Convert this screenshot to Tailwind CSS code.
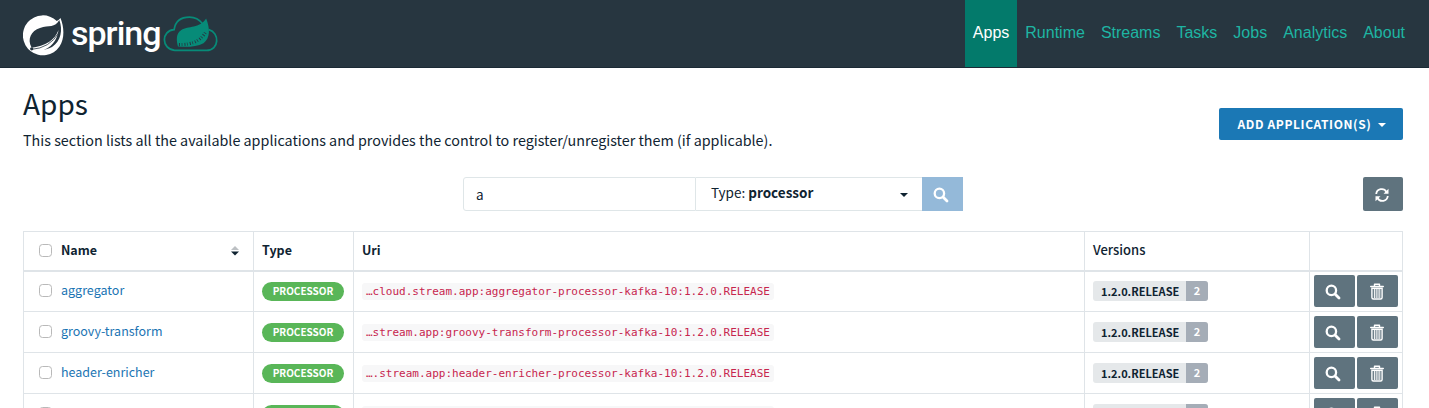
<!DOCTYPE html>
<html lang="en">
<head>
<meta charset="utf-8">
<title>Apps</title>
<script src="https://cdn.jsdelivr.net/npm/@tailwindcss/browser@4"></script>
</head>
<body class="h-[408px] overflow-hidden bg-white font-['Noto_Sans_CJK_SC','Noto_Sans',sans-serif] text-[13.5px] text-[#0f2331]">
<svg class="hidden">
  <symbol id="search" viewBox="0 0 16 16"><circle cx="6.4" cy="6.4" r="4.7" fill="none" stroke="currentColor" stroke-width="2.3"/><path d="M10 10l4 4" stroke="currentColor" stroke-width="2.8" stroke-linecap="round"/></symbol>
  <symbol id="trash" viewBox="0 0 14 17"><path d="M.7 3.5h12.6M4.5 3V1.2h5V3" fill="none" stroke="currentColor" stroke-width="1.4" stroke-linecap="round" stroke-linejoin="round"/><path d="M1.9 5.2v9.3q0 1.5 1.5 1.5h7.2q1.5 0 1.5-1.5V5.2z" fill="none" stroke="currentColor" stroke-width="1.4"/><path d="M4.4 5.5v9.500M6.200 5.500v9.500M8 5.500v9.500M9.800 5.500v9.500" stroke="currentColor" stroke-width="1"/></symbol>
</svg>
<header class="flex h-[68px] items-start justify-between border-b border-[#1b2a35] bg-[#273640] pr-4 pl-[23px]">
  <div class="flex pt-3.5">
    <svg class="mt-px h-[41px] w-[41px]" viewBox="0 0 41 41"><path d="M37.500 3C41 12 42 23 36.500 31.500A20 20 0 1 1 33.800 6Q36 5 37.500 3Z" fill="#fff"/><path d="M36.300 5C32 13 26 10 17 13C8 16 4 24 8.500 32.500C12 36 22 36 29 32C38 26 40 15 36.300 5Z" fill="#273640"/><path d="M35.500 15C32 25 23 31 7.500 33C9 35.500 13 36.200 18 36C28 33 34 26 35.500 15Z" fill="#fff"/><path d="M8 34.500Q27 33 35.500 18" fill="none" stroke="#273640" stroke-width=".8"/><circle cx="8.700" cy="33.800" r="1.600" fill="#273640"/></svg>
    <span class="ml-[7px] w-[92px] font-[Roboto,sans-serif] text-[34px] leading-[38px] font-medium tracking-[-1px] text-white">spring</span>
    <svg class="mt-px h-[37px] w-[55px] overflow-visible" viewBox="0 0 57 38"><path d="M12 36.500C-2 35 -2 16 11.500 15C13 5 20 2 27.500 2C34 2 38 5 41 9M47.500 15C59 18 58.500 36.500 45 36.500H12" fill="none" stroke="#078b78" stroke-width="1.800"/><path d="M44.700 3.500C49 14 49 24 42 29C35 33 25 33 15.500 32.500C14 27 13 19 19 15.500C26 11 38 14 44.700 3.500Z" fill="#078b78"/><path d="M16.500 30.500Q37 31 44.500 17" fill="none" stroke="#273640" stroke-width="3.200" stroke-dasharray="1 1.700 .7 2.200"/></svg>
  </div>
  <nav class="flex h-[67px] font-['Liberation_Sans',sans-serif] text-[16px] leading-[66px] text-[#1eb5a3]">
    <a class="bg-[#037a6b] px-2 text-white">Apps</a><a class="px-2">Runtime</a><a class="px-2">Streams</a><a class="px-2">Tasks</a><a class="px-2">Jobs</a><a class="px-2">Analytics</a><a class="px-2">About</a>
  </nav>
</header>
<main class="px-[23px]">
  <div class="flex h-[109px] justify-between">
    <div class="pt-[18px]">
      <h1 class="text-[28px] leading-[34px]">Apps</h1>
      <p class="mt-2 text-[14.33px] leading-6 whitespace-nowrap">This section lists all the available applications and provides the control to register/unregister them (if applicable).</p>
    </div>
    <button class="mt-10 mr-[3px] flex h-8 w-[184px] items-center rounded-[2px] bg-[#1b78b5] pl-[18px] text-[12px] font-bold tracking-[.6px] whitespace-nowrap text-white"><span class="w-[135px]">ADD APPLICATION(S)</span><svg class="mt-px ml-1.5 h-1 w-2" viewBox="0 0 8 4"><path d="M0 0h8L4 4z" fill="currentColor"/></svg></button>
  </div>
  <div class="flex h-[54px]">
    <div class="ml-[440px] flex h-[34px] w-[500px]">
      <div class="w-[233px] rounded-l-[3px] border border-[#dfe6e8] pl-3 leading-[33px]">a</div>
      <div class="flex w-[226px] items-center justify-between border-y border-[#dfe6e8] pr-3.5 pl-[15px] leading-8"><span class="-mt-1">Type: <b>processor</b></span><svg class="mt-0.5 h-1 w-2" viewBox="0 0 8 4"><path d="M0 0h8L4 4z" fill="currentColor"/></svg></div>
      <div class="flex w-[41px] items-center justify-center bg-[#94b9d9] text-white"><svg class="mt-0.5 -ml-[3px] h-4 w-4"><use href="#search"/></svg></div>
    </div>
    <div class="mr-[3px] ml-auto flex h-[34px] w-10 items-center justify-center rounded-[2px] bg-[#5f737e] text-white"><svg class="-ml-[3px] mt-0.5 h-3.5 w-3.5" viewBox="0 0 14 14"><path d="M1.200 6A5.500 5.500 0 0 1 11.500 4M12.800 8A5.500 5.500 0 0 1 2.500 10" fill="none" stroke="currentColor" stroke-width="1.800"/><path d="M13.500 .8v5H8.500zM.5 13.200V8.200h5z" fill="currentColor"/></svg></div>
  </div>
  <table class="w-[1380px] table-fixed border-collapse text-left text-[12.5px]">
    <colgroup><col class="w-[230px]"><col class="w-[100px]"><col class="w-[731px]"><col class="w-[225px]"><col class="w-[93px]"></colgroup>
    <thead><tr class="h-[39px] border-b-2 border-[#dfe4e8] leading-5 [&>th]:border-x [&>th]:border-t [&>th]:border-[#dfe4e8] [&>th]:pt-0 [&>th]:pb-0.5 [&>th]:pl-2">
      <th><div class="flex items-center pr-3.5 pl-[7px]"><i class="mt-0.5 mr-[9px] h-[13px] w-[13px] rounded-[3.5px] border border-[#b9b9b9]"></i>Name<svg class="mt-0.5 ml-auto h-2.5 w-2" viewBox="0 0 8 10"><path d="M0 4h8L4 0z" fill="#bcc0c3"/><path d="M0 5.500h8L4 9.500z" fill="#0f2331"/></svg></div></th><th>Type</th><th>Uri</th><th class="text-[13px] font-medium">Versions</th><th></th>
    </tr></thead>
    <tbody id="rows"></tbody>
  </table>
</main>
<template id="row"><tr class="h-[41px] leading-5 [&>td]:border [&>td]:border-[#dfe4e8] [&>td]:py-0 [&>td]:pl-2">
  <td><div class="flex items-center pb-0.5 pl-[7px]"><i class="mt-px mr-[9px] h-[13px] w-[13px] rounded-[3.5px] border border-[#b9b9b9]"></i><a class="name text-[#1b74b3]"></a></div></td>
  <td><div class="flex h-[19px] w-[82px] items-center justify-center rounded-full bg-[#59b658] text-[10px] font-bold tracking-[0] text-white">PROCESSOR</div></td>
  <td><div class="uri flex h-[17px] w-[412px] items-center rounded-[3px] bg-[#f7f7f8] pt-px pl-1 font-['DejaVu_Sans_Mono',monospace] text-[11px] whitespace-nowrap text-[#c7254e]"></div></td>
  <td><div class="flex h-5 w-[115px] items-center overflow-hidden rounded-[3px] bg-[#e5e8ea] text-[11px] leading-[19px] font-bold"><span class="w-[93px] pl-2">1.2.0.RELEASE</span><span class="h-5 flex-1 bg-[#a5adb7] text-center text-white">2</span></div></td>
  <td><div class="-ml-1 flex gap-0.5 text-white"><div class="flex h-8 w-[41px] items-center justify-center rounded-[2px] bg-[#5f737e]"><svg class="mt-0.5 -ml-[3px] h-4 w-4"><use href="#search"/></svg></div><div class="flex h-8 w-[41px] items-center justify-center rounded-[2px] bg-[#5f737e]"><svg class="-ml-0.5 h-[17px] w-3.5"><use href="#trash"/></svg></div></div></td>
</tr></template>
<script>
const apps = [
  ['aggregator', '…cloud.stream.app:aggregator-processor-kafka-10:1.2.0.RELEASE'],
  ['groovy-transform', '…stream.app:groovy-transform-processor-kafka-10:1.2.0.RELEASE'],
  ['header-enricher', '….stream.app:header-enricher-processor-kafka-10:1.2.0.RELEASE'],
  ['scriptable-transform', '…am.app:scriptable-transform-processor-kafka-10:1.2.0.RELEASE'],
];
for (const [name, uri] of apps) {
  const r = document.getElementById('row').content.cloneNode(true);
  r.querySelector('.name').textContent = name;
  r.querySelector('.uri').textContent = uri;
  document.getElementById('rows').append(r);
}
</script>
</body>
</html>
